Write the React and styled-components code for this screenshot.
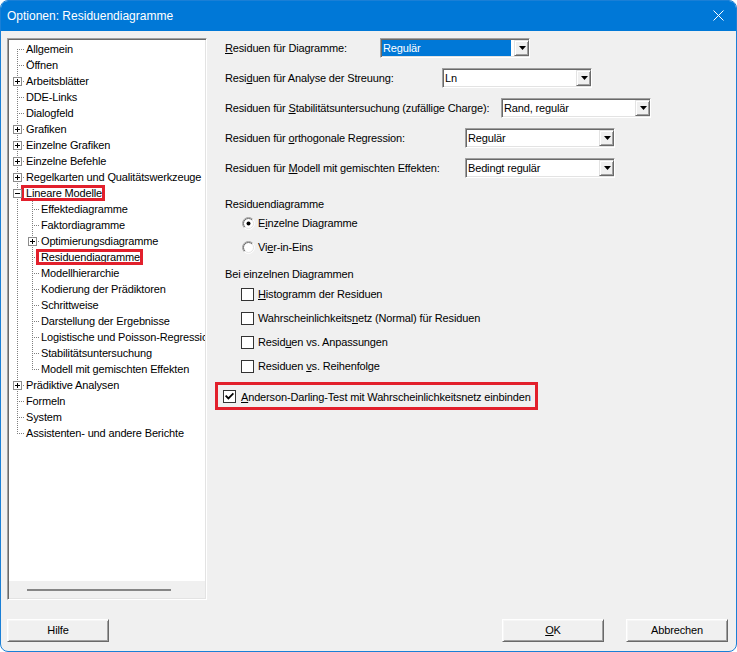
import React from 'react';
import styled, { createGlobalStyle, css } from 'styled-components';

const FONT = '"Liberation Sans", Arial, sans-serif';

const GlobalStyle = createGlobalStyle`
  html, body { margin: 0; padding: 0; background: #ffffff; }
  body { font-family: ${FONT}; }
  #root { width: 737px; height: 652px; }
  *, *::before, *::after { box-sizing: border-box; }
`;

const Window = styled.div`
  width: 737px;
  height: 652px;
  display: flex;
  flex-direction: column;
  background: #f0f0f0;
  border: 1px solid #1a7fd6;
  border-radius: 8px;
  overflow: hidden;
`;

const TitleBar = styled.div`
  height: 30px;
  flex: none;
  background: #0078d7;
  color: #ffffff;
  font-size: 12px;
  display: flex;
  align-items: center;
  justify-content: space-between;
  padding: 0 12px 1px 6px;
`;

const Body = styled.div`
  flex: 1;
  display: flex;
  flex-direction: column;
  padding: 7px 8px 9px 6px;
  font-size: 11px;
  letter-spacing: -0.15px;
  color: #000;
`;

const Main = styled.div`
  height: 562px;
  display: flex;
`;

const sunken = css`
  border: 1px solid;
  border-color: #a0a0a0 #ffffff #ffffff #a0a0a0;
  box-shadow: inset 1px 1px #696969, inset -1px -1px #e3e3e3;
`;

const TreePanel = styled.div`
  width: 200px;
  height: 100%;
  flex: none;
  ${sunken};
  background: #ffffff;
  display: flex;
  flex-direction: column;
  overflow: hidden;
  padding: 1px;
`;

const TreeList = styled.div`
  flex: 1;
  padding: 1px 0 0 1px;
  overflow: hidden;
`;

const TreeRow = styled.div`
  height: 16px;
  display: flex;
  align-items: center;
  white-space: nowrap;
`;

const Guide = styled.div`
  width: 15px;
  height: 16px;
  flex: none;
  position: relative;
  &::before {
    content: '';
    position: absolute;
    left: 7px;
    width: 1px;
    display: ${(p) => (p.$v === 'none' ? 'none' : 'block')};
    top: ${(p) => (p.$v === 'bottom' ? '8px' : '0')};
    height: ${(p) => (p.$v === 'full' ? '16px' : p.$v === 'top' ? '9px' : '8px')};
    background-image: repeating-linear-gradient(to bottom, #7f7f7f 0 1px, transparent 1px 2px);
  }
  &::after {
    content: '';
    position: absolute;
    display: ${(p) => (p.$h ? 'block' : 'none')};
    top: 8px;
    left: 8px;
    width: 7px;
    height: 1px;
    background-image: repeating-linear-gradient(to right, transparent 0 1px, #7f7f7f 1px 2px);
  }
`;

const Expander = styled.div`
  position: absolute;
  left: 3px;
  top: 4px;
  width: 9px;
  height: 9px;
  border: 1px solid #8c8c8c;
  background: #ffffff;
  z-index: 1;
  &::before {
    content: '';
    position: absolute;
    left: 1px;
    top: 3px;
    width: 5px;
    height: 1px;
    background: #000;
  }
  &::after {
    content: '';
    position: absolute;
    display: ${(p) => (p.$open ? 'none' : 'block')};
    left: 3px;
    top: 1px;
    width: 1px;
    height: 5px;
    background: #000;
  }
`;

const NodeLabel = styled.span`
  position: relative;
  padding-left: 1px;
  line-height: 16px;
  &::after {
    content: '';
    position: absolute;
    display: ${(p) => (p.$highlight ? 'block' : 'none')};
    top: 0;
    bottom: 0;
    left: -4px;
    right: -3px;
    border: 3px solid #e2202c;
  }
`;

const ScrollTrack = styled.div`
  height: 17px;
  flex: none;
  background: #f0f0f0;
  padding: 8px 0 0 18px;
`;

const ScrollThumb = styled.div`
  width: 144px;
  height: 2px;
  background: #868686;
`;

const RightPanel = styled.div`
  flex: 1;
  padding-left: 18px;
  display: flex;
  flex-direction: column;
`;

const Fields = styled.div`
  display: flex;
  flex-direction: column;
  gap: 10px;
`;

const FieldRow = styled.div`
  height: 20px;
  display: flex;
  align-items: center;
`;

const FieldLabel = styled.div`
  width: ${(p) => p.$w}px;
  flex: none;
  white-space: nowrap;
`;

const Combo = styled.div`
  width: 150px;
  height: 20px;
  flex: none;
  display: flex;
  background: #ffffff;
  ${sunken};
  padding: 1px 0 1px 1px;
`;

const ComboValue = styled.div`
  flex: 1;
  line-height: 16px;
  padding-left: 1px;
  white-space: nowrap;
  ${(p) =>
    p.$selected &&
    css`
      background: #0078d7;
      color: #ffffff;
      margin-right: 3px;
    `}
`;

const DropButton = styled.div`
  width: 15px;
  height: 16px;
  flex: none;
  background: #f0f0f0;
  border: 1px solid;
  border-color: #e3e3e3 #696969 #696969 #e3e3e3;
  box-shadow: inset 1px 1px #ffffff, inset -1px -1px #a0a0a0;
  display: flex;
  align-items: center;
  justify-content: center;
  padding-left: 1px;
`;

const GroupLabel = styled.div`
  height: 14px;
  line-height: 14px;
  margin-top: ${(p) => p.$top}px;
  white-space: nowrap;
`;

const OptionRow = styled.div`
  height: 24px;
  display: flex;
  align-items: center;
  padding-left: ${(p) => p.$indent}px;
  gap: ${(p) => p.$gap}px;
  white-space: nowrap;
`;

const CheckBox = styled.div`
  width: 13px;
  height: 13px;
  flex: none;
  border: 1px solid #333333;
  background: #ffffff;
  display: flex;
  align-items: center;
  justify-content: center;
`;

const HighlightBox = styled.div`
  margin-top: 4px;
  margin-left: -10px;
  width: 323px;
  height: 28px;
  border: 3px solid #e2202c;
  display: flex;
  align-items: center;
  padding: 1px 0 0 5px;
  gap: 5px;
  white-space: nowrap;
`;

const Mn = styled.span`
  text-decoration: underline;
  text-underline-offset: 1px;
`;

const Footer = styled.div`
  margin-top: 19px;
  height: 23px;
  display: flex;
  gap: 22px;
`;

const Spacer = styled.div`
  flex: 1;
`;

const Button = styled.button`
  width: 102px;
  height: 23px;
  font-family: ${FONT};
  font-size: 11px;
  letter-spacing: -0.15px;
  color: #000;
  background: #f0f0f0;
  border: 1px solid;
  border-color: #ffffff #696969 #696969 #ffffff;
  box-shadow: inset 1px 1px #f6f6f6, inset -1px -1px #a0a0a0;
  padding: 0 0 1px 0;
  margin: 0;
`;

const Radio = ({ checked }) => (
  <svg width="13" height="13" viewBox="0 0 13 13" style={{ flex: 'none' }}>
    <circle cx="6.5" cy="6.5" r="5.5" fill="#ffffff" />
    <path d="M2.257 10.743 A6 6 0 0 1 10.743 2.257" fill="none" stroke="#a0a0a0" strokeWidth="1" />
    <path d="M10.743 2.257 A6 6 0 0 1 2.257 10.743" fill="none" stroke="#ffffff" strokeWidth="1" />
    <path d="M2.964 10.036 A5 5 0 0 1 10.036 2.964" fill="none" stroke="#696969" strokeWidth="1" />
    <path d="M10.036 2.964 A5 5 0 0 1 2.964 10.036" fill="none" stroke="#e3e3e3" strokeWidth="1" />
    {checked && <circle cx="6.5" cy="6.5" r="2" fill="#000" />}
  </svg>
);

const Check = ({ checked }) => (
  <CheckBox>
    {checked && (
      <svg width="9" height="9" viewBox="0 0 9 9">
        <path d="M1.2 4.2 L3.4 6.4 L7.8 2" fill="none" stroke="#000" strokeWidth="1.8" strokeLinecap="square" />
      </svg>
    )}
  </CheckBox>
);

const Arrow = () => (
  <svg width="7" height="4" viewBox="0 0 7 4">
    <polygon points="0,0 7,0 3.5,4" fill="#000" />
  </svg>
);

const CloseIcon = () => (
  <svg width="11" height="11" viewBox="0 0 11 11">
    <path d="M0.5 0.5 L10.5 10.5 M10.5 0.5 L0.5 10.5" stroke="#fff" strokeWidth="1" />
  </svg>
);

const tree = [
  { label: 'Allgemein' },
  { label: 'Öffnen' },
  { label: 'Arbeitsblätter', children: [], open: false },
  { label: 'DDE-Links' },
  { label: 'Dialogfeld' },
  { label: 'Grafiken', children: [], open: false },
  { label: 'Einzelne Grafiken', children: [], open: false },
  { label: 'Einzelne Befehle', children: [], open: false },
  { label: 'Regelkarten und Qualitätswerkzeuge', children: [], open: false },
  {
    label: 'Lineare Modelle',
    open: true,
    highlight: true,
    children: [
      { label: 'Effektediagramme' },
      { label: 'Faktordiagramme' },
      { label: 'Optimierungsdiagramme', children: [], open: false },
      { label: 'Residuendiagramme', highlight: true },
      { label: 'Modellhierarchie' },
      { label: 'Kodierung der Prädiktoren' },
      { label: 'Schrittweise' },
      { label: 'Darstellung der Ergebnisse' },
      { label: 'Logistische und Poisson-Regression' },
      { label: 'Stabilitätsuntersuchung' },
      { label: 'Modell mit gemischten Effekten' },
    ],
  },
  { label: 'Prädiktive Analysen', children: [], open: false },
  { label: 'Formeln' },
  { label: 'System' },
  { label: 'Assistenten- und andere Berichte' },
];

function flatten(nodes, level, ancestors, out) {
  nodes.forEach((n, i) => {
    const isLast = i === nodes.length - 1;
    const isFirstRoot = level === 0 && i === 0;
    out.push({ ...n, level, ancestors, isLast, isFirstRoot });
    if (n.open && n.children) {
      flatten(n.children, level + 1, [...ancestors, !isLast], out);
    }
  });
  return out;
}

const rows = flatten(tree, 0, [], []);

const fields = [
  { label: <><Mn>R</Mn>esiduen für Diagramme:</>, w: 155, value: 'Regulär', selected: true },
  { label: <>Resi<Mn>d</Mn>uen für Analyse der Streuung:</>, w: 217, value: 'Ln' },
  { label: <>Residuen für <Mn>S</Mn>tabilitätsuntersuchung (zufällige Charge):</>, w: 276, value: 'Rand, regulär' },
  { label: <>Residuen für <Mn>o</Mn>rthogonale Regression:</>, w: 240, value: 'Regulär' },
  { label: <>Residuen für <Mn>M</Mn>odell mit gemischten Effekten:</>, w: 240, value: 'Bedingt regulär' },
];

const checks = [
  <><Mn>H</Mn>istogramm der Residuen</>,
  <>Wahrscheinlichkeits<Mn>n</Mn>etz (Normal) für Residuen</>,
  <>Resid<Mn>u</Mn>en vs. Anpassungen</>,
  <>Residuen <Mn>v</Mn>s. Reihenfolge</>,
];

export default function App() {
  return (
    <>
      <GlobalStyle />
      <Window>
        <TitleBar>
          <span>Optionen: Residuendiagramme</span>
          <CloseIcon />
        </TitleBar>
        <Body>
          <Main>
            <TreePanel>
              <TreeList>
                {rows.map((r, idx) => (
                  <TreeRow key={idx}>
                    {r.ancestors.map((has, j) => (
                      <Guide key={j} $v={has ? 'full' : 'none'} />
                    ))}
                    <Guide $v={r.isLast ? 'top' : r.isFirstRoot ? 'bottom' : 'full'} $h>
                      {r.children && <Expander $open={r.open} />}
                    </Guide>
                    <NodeLabel $highlight={r.highlight}>{r.label}</NodeLabel>
                  </TreeRow>
                ))}
              </TreeList>
              <ScrollTrack>
                <ScrollThumb />
              </ScrollTrack>
            </TreePanel>
            <RightPanel>
              <Fields>
                {fields.map((f, i) => (
                  <FieldRow key={i}>
                    <FieldLabel $w={f.w}>{f.label}</FieldLabel>
                    <Combo>
                      <ComboValue $selected={f.selected}>{f.value}</ComboValue>
                      <DropButton>
                        <Arrow />
                      </DropButton>
                    </Combo>
                  </FieldRow>
                ))}
              </Fields>
              <GroupLabel $top={19}>Residuendiagramme</GroupLabel>
              <OptionRow $indent={17} $gap={3}>
                <Radio checked />
                <span>E<Mn>i</Mn>nzelne Diagramme</span>
              </OptionRow>
              <OptionRow $indent={17} $gap={3}>
                <Radio />
                <span>Vi<Mn>e</Mn>r-in-Eins</span>
              </OptionRow>
              <GroupLabel $top={8}>Bei einzelnen Diagrammen</GroupLabel>
              <div style={{ height: 1 }} />
              {checks.map((c, i) => (
                <OptionRow key={i} $indent={16} $gap={4}>
                  <Check />
                  <span>{c}</span>
                </OptionRow>
              ))}
              <HighlightBox>
                <Check checked />
                <span><Mn>A</Mn>nderson-Darling-Test mit Wahrscheinlichkeitsnetz einbinden</span>
              </HighlightBox>
            </RightPanel>
          </Main>
          <Footer>
            <Button>Hilfe</Button>
            <Spacer />
            <Button><Mn>O</Mn>K</Button>
            <Button>Abbrechen</Button>
          </Footer>
        </Body>
      </Window>
    </>
  );
}
